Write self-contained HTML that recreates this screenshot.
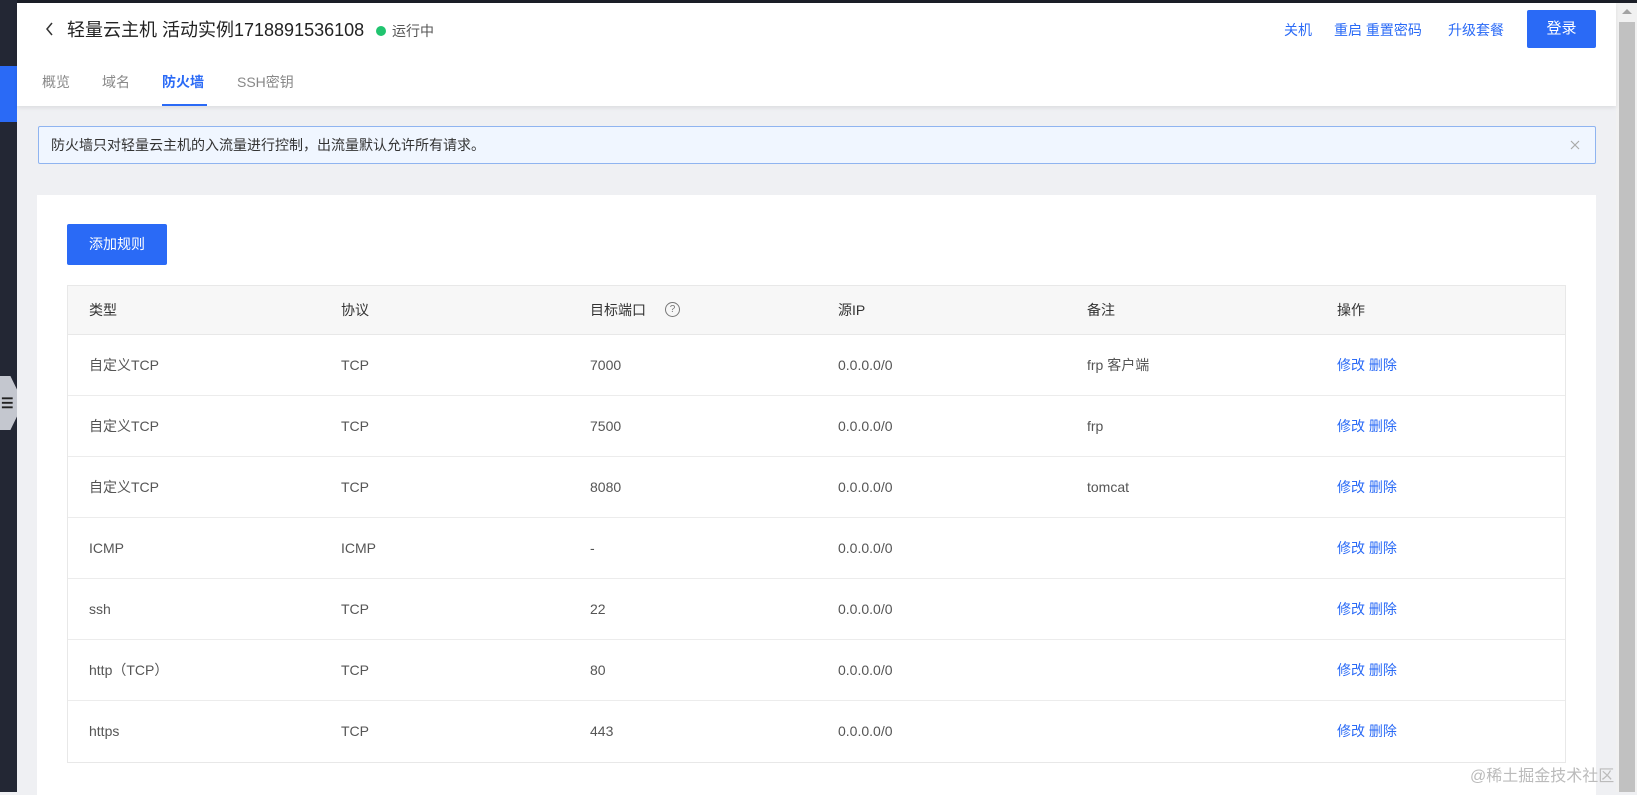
<!DOCTYPE html>
<html><head><meta charset="utf-8"><style>
*{margin:0;padding:0;box-sizing:border-box}
body{width:1637px;height:792px;overflow:hidden;background:#eff0f3;font-family:"Liberation Sans","Noto Sans CJK SC",sans-serif;position:relative;color:#333}
.a{position:absolute;white-space:nowrap;line-height:20px}
.blue{color:#2a6af6}
</style></head><body>
<div class="a" style="left:0;top:0;width:1637px;height:3px;background:#1b1e27"></div>
<div class="a" style="left:0;top:0;width:17px;height:792px;background:#232734"></div>
<div class="a" style="left:0;top:66px;width:17px;height:56px;background:#2a6af6"></div>
<div class="a" style="left:-16px;top:376px;width:33px;height:54px;background:#c4c7cf;clip-path:polygon(30% 0,80% 0,100% 25%,100% 75%,80% 100%,30% 100%,0 50%)"></div>
<div class="a" style="left:1px;top:393px;font-size:14px;color:#222;font-weight:bold">☰</div>
<div class="a" style="left:1616px;top:3px;width:21px;height:789px;background:#f1f1f1"></div>
<div class="a" style="left:1619px;top:22px;width:16px;height:770px;background:#c1c1c1"></div>
<div class="a" style="left:1622px;top:9px;width:0;height:0;border-left:5px solid transparent;border-right:5px solid transparent;border-bottom:5px solid #a3a3a3"></div>

<div class="a" style="left:17px;top:3px;width:1599px;height:103px;background:#fff;box-shadow:0 2px 4px rgba(0,0,0,.08)"></div>
<svg class="a" style="left:45px;top:22px" width="10" height="14"><path d="M7 1 L2 7 L7 13" fill="none" stroke="#333" stroke-width="1.5"/></svg>
<div class="a" style="left:67px;top:18px;font-size:18px;line-height:24px;color:#222">轻量云主机 活动实例1718891536108</div>
<div class="a" style="left:376px;top:26px;width:10px;height:10px;border-radius:50%;background:#20c46f"></div>
<div class="a" style="left:392px;top:21px;font-size:14px;color:#555">运行中</div>
<div class="a blue" style="left:1284px;top:20px;font-size:14px">关机</div>
<div class="a blue" style="left:1334px;top:20px;font-size:14px">重启 重置密码</div>
<div class="a blue" style="left:1448px;top:20px;font-size:14px">升级套餐</div>
<div class="a" style="left:1527px;top:10px;width:69px;height:38px;background:#2a6af6;border-radius:2px;color:#fff;font-size:15px;text-align:center;line-height:38px">登录</div>
<div class="a" style="left:42px;top:72px;font-size:14px;color:#888">概览</div>
<div class="a" style="left:102px;top:72px;font-size:14px;color:#888">域名</div>
<div class="a blue" style="left:162px;top:72px;font-size:14px;font-weight:bold">防火墙</div>
<div class="a" style="left:237px;top:72px;font-size:14px;color:#888">SSH密钥</div>
<div class="a" style="left:162px;top:104px;width:45px;height:2px;background:#2a6af6"></div>

<div class="a" style="left:38px;top:126px;width:1558px;height:38px;background:#f0f6ff;border:1px solid #8fb4f0;border-radius:2px"></div>
<div class="a" style="left:51px;top:135px;font-size:14px;color:#333">防火墙只对轻量云主机的入流量进行控制，出流量默认允许所有请求。</div>
<svg class="a" style="left:1570px;top:140px" width="10" height="10"><path d="M1 1L9 9M9 1L1 9" stroke="#aaa" stroke-width="1.2"/></svg>

<div class="a" style="left:37px;top:195px;width:1559px;height:600px;background:#fff"></div>
<div class="a" style="left:67px;top:224px;width:100px;height:41px;background:#2a6af6;border-radius:2px;color:#fff;font-size:14px;text-align:center;line-height:41px">添加规则</div>

<div class="a" style="left:67px;top:285px;width:1499px;height:478px;border:1px solid #e8e8e8"></div>
<div class="a" style="left:68px;top:286px;width:1497px;height:49px;background:#f7f7f7;border-bottom:1px solid #e8e8e8"></div>
<div style="position:absolute;left:0;top:0;font-size:14px;color:#333">
<div class="a" style="left:89px;top:300px">类型</div>
<div class="a" style="left:341px;top:300px">协议</div>
<div class="a" style="left:590px;top:300px">目标端口</div>
<div class="a" style="left:665px;top:302px;width:15px;height:15px;border:1px solid #777;border-radius:50%;font-size:10px;text-align:center;line-height:13px;color:#777">?</div>
<div class="a" style="left:838px;top:300px">源IP</div>
<div class="a" style="left:1087px;top:300px">备注</div>
<div class="a" style="left:1337px;top:300px">操作</div>
</div>
<div id="rows"></div>
<script>
var d=[["自定义TCP","TCP","7000","0.0.0.0/0","frp 客户端"],["自定义TCP","TCP","7500","0.0.0.0/0","frp"],["自定义TCP","TCP","8080","0.0.0.0/0","tomcat"],["ICMP","ICMP","-","0.0.0.0/0",""],["ssh","TCP","22","0.0.0.0/0",""],["http（TCP）","TCP","80","0.0.0.0/0",""],["https","TCP","443","0.0.0.0/0",""]];
var xs=[89,341,590,838,1087],h="";
d.forEach(function(r,i){var t=335+i*61;
if(i<6)h+='<div class="a" style="left:68px;top:'+(t+60)+'px;width:1497px;height:1px;background:#ececec"></div>';
r.forEach(function(c,j){h+='<div class="a" style="left:'+xs[j]+'px;top:'+(t+20)+'px;font-size:14px;color:#555">'+c+'</div>'});
h+='<div class="a blue" style="left:1337px;top:'+(t+20)+'px;font-size:14px">修改 删除</div>';});
document.getElementById('rows').innerHTML=h;
</script>
<div class="a" style="left:1470px;top:767px;font-size:16px;color:#bbb">@稀土掘金技术社区</div>
</body></html>
